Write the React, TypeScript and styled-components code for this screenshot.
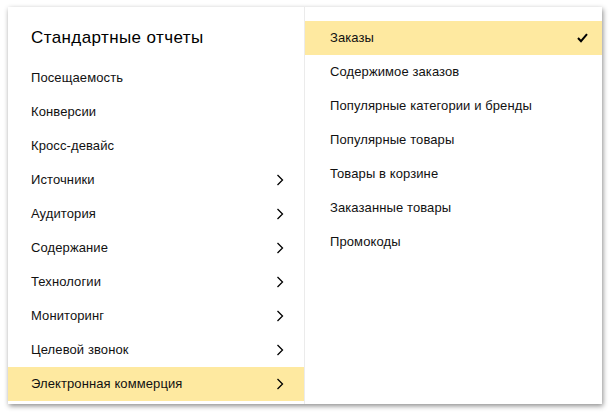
import React from "react";
import styled, { createGlobalStyle } from "styled-components";

const Global = createGlobalStyle`
  html, body { margin: 0; padding: 0; background: #fff; }
  body { font-family: "Liberation Sans", Arial, sans-serif; }
`;

const Page = styled.div`
  padding: 7px 8px 9px 8px;
  width: 610px;
  height: 413px;
  box-sizing: border-box;
`;

const Panel = styled.div`
  display: grid;
  grid-template-columns: 296px 1px 1fr;
  width: 594px;
  height: 397px;
  background: #fff;
  box-shadow: 1px 2px 5px rgba(0, 0, 0, 0.45);
`;

const Column = styled.div<{ $top: number }>`
  display: flex;
  flex-direction: column;
  padding-top: ${(p) => p.$top}px;
`;

const Divider = styled.div`
  background: #ebebeb;
`;

const Title = styled.div`
  height: 54px;
  box-sizing: border-box;
  padding: 8px 0 0 23px;
  display: flex;
  align-items: center;
  font-size: 17px;
  color: #000;
  letter-spacing: 0.4px;
`;

const Row = styled.div<{ $active?: boolean; $indent: number; $end: number }>`
  height: 34px;
  box-sizing: border-box;
  display: flex;
  align-items: center;
  justify-content: space-between;
  padding: 0 ${(p) => p.$end}px 1px ${(p) => p.$indent}px;
  font-size: 13px;
  color: #111;
  background: ${(p) => (p.$active ? "#fee9a0" : "transparent")};
`;

const Label = styled.span`
  letter-spacing: 0.1px;
`;

const Chevron = () => (
  <svg width="8" height="12" viewBox="0 0 8 12">
    <path d="M1.5 1 L6.5 6 L1.5 11" fill="none" stroke="#000" strokeWidth="1.3" />
  </svg>
);

const Check = () => (
  <svg width="11" height="10" viewBox="0 0 11 10">
    <path d="M1 5 L4 8.2 L10 1.2" fill="none" stroke="#000" strokeWidth="2" />
  </svg>
);

const leftItems: { label: string; sub?: boolean; active?: boolean }[] = [
  { label: "Посещаемость" },
  { label: "Конверсии" },
  { label: "Кросс-девайс" },
  { label: "Источники", sub: true },
  { label: "Аудитория", sub: true },
  { label: "Содержание", sub: true },
  { label: "Технологии", sub: true },
  { label: "Мониторинг", sub: true },
  { label: "Целевой звонок", sub: true },
  { label: "Электронная коммерция", sub: true, active: true },
];

const rightItems = [
  "Заказы",
  "Содержимое заказов",
  "Популярные категории и бренды",
  "Популярные товары",
  "Товары в корзине",
  "Заказанные товары",
  "Промокоды",
];

export default function App() {
  return (
    <Page>
      <Global />
      <Panel>
        <Column $top={0}>
          <Title>Стандартные отчеты</Title>
          {leftItems.map((it) => (
            <Row key={it.label} $indent={23} $end={20} $active={it.active}>
              <Label>{it.label}</Label>
              {it.sub && <Chevron />}
            </Row>
          ))}
        </Column>
        <Divider />
        <Column $top={14}>
          {rightItems.map((label, i) => (
            <Row key={label} $indent={25} $end={14} $active={i === 0}>
              <Label>{label}</Label>
              {i === 0 && <Check />}
            </Row>
          ))}
        </Column>
      </Panel>
    </Page>
  );
}
